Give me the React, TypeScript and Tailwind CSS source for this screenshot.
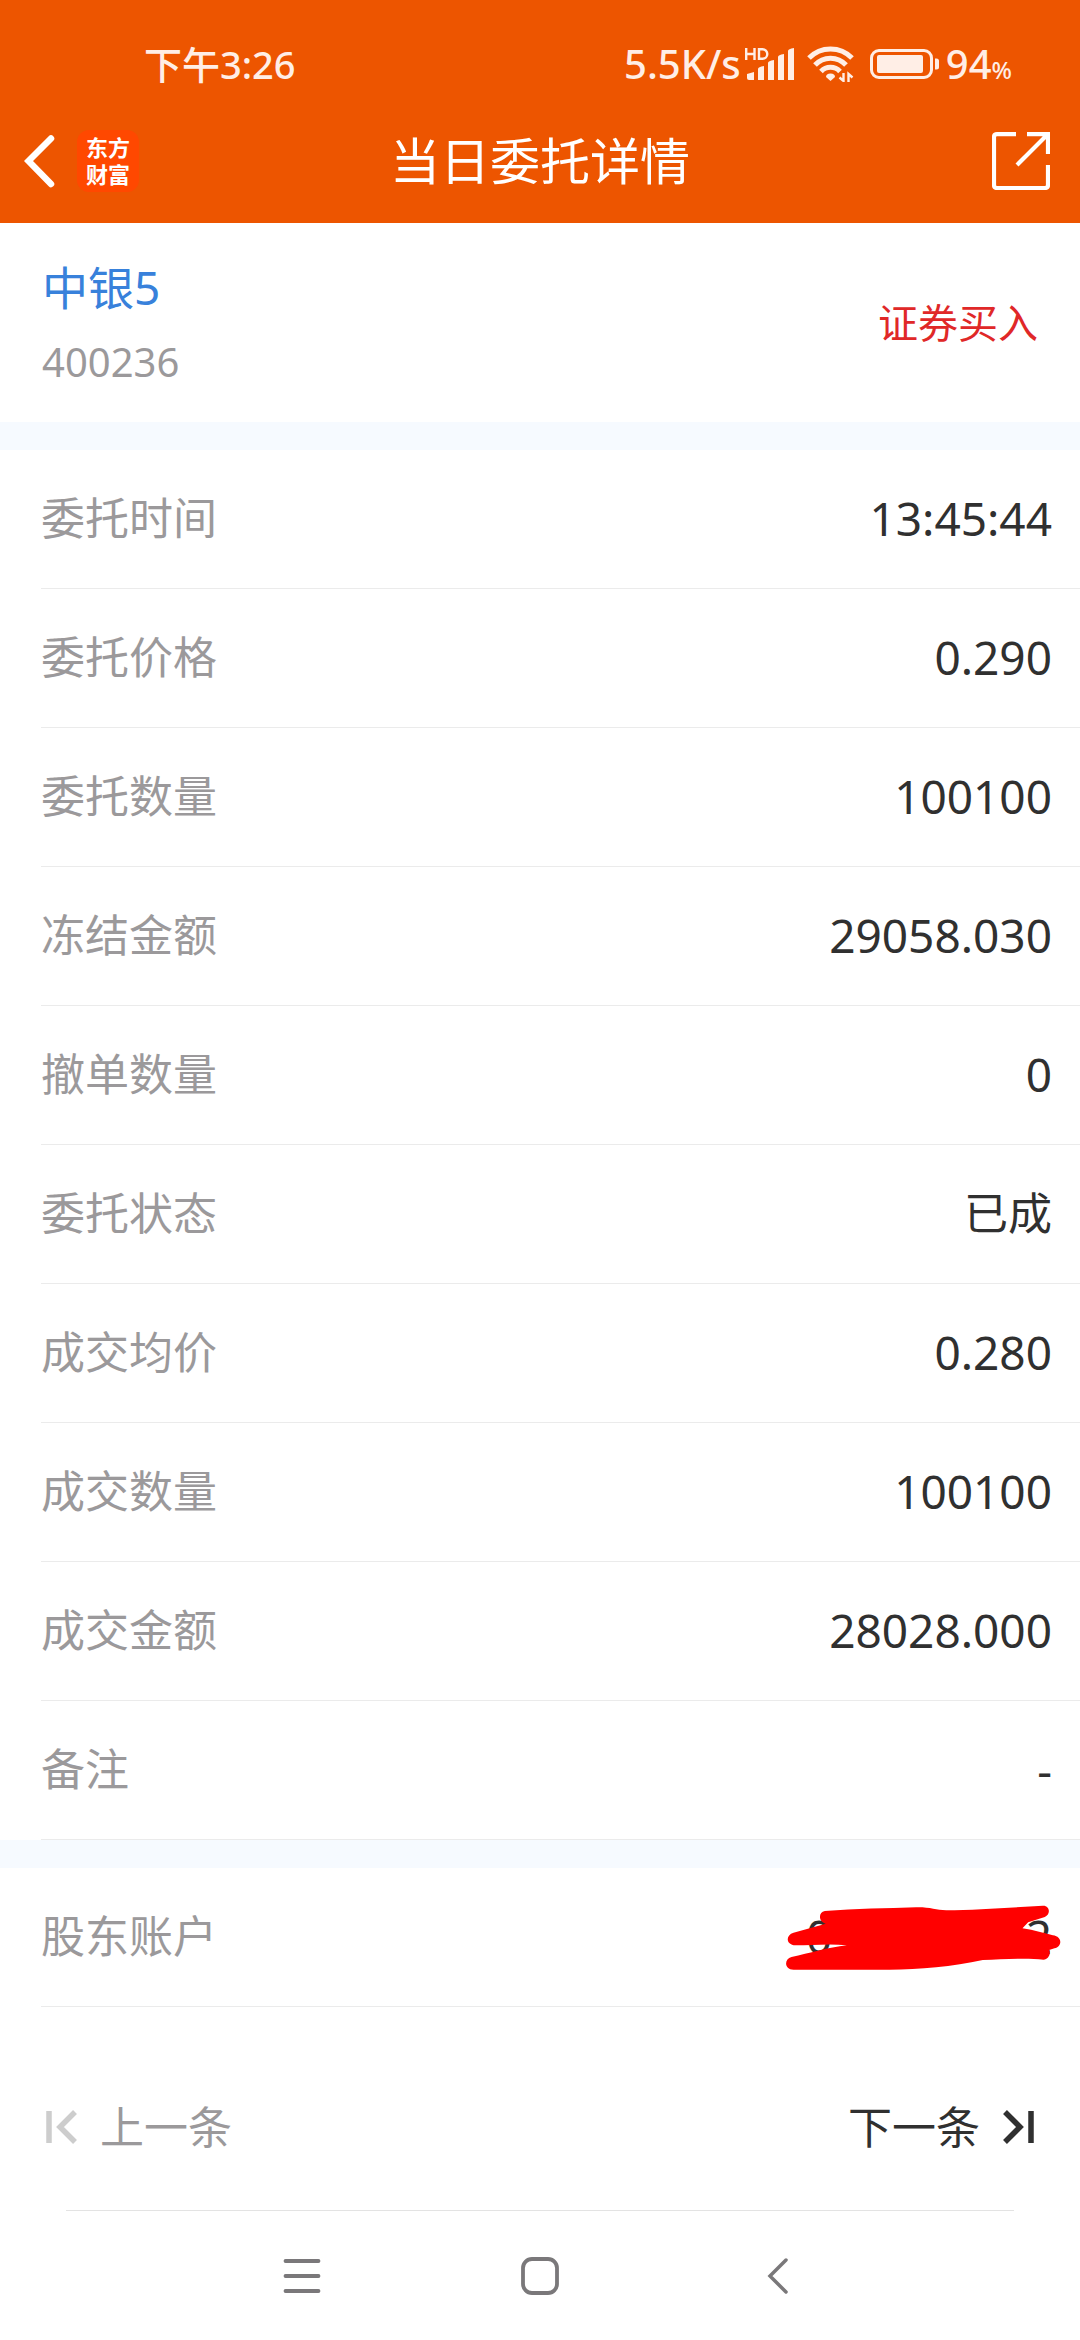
import React from "react";

const details: [string, string][] = [
  ["委托时间", "13:45:44"],
  ["委托价格", "0.290"],
  ["委托数量", "100100"],
  ["冻结金额", "29058.030"],
  ["撤单数量", "0"],
  ["委托状态", "已成"],
  ["成交均价", "0.280"],
  ["成交数量", "100100"],
  ["成交金额", "28028.000"],
  ["备注", "-"],
];

function SignalIcon() {
  return (
    <svg className="h-8 w-[50px]" viewBox="0 0 50 32" fill="currentColor" aria-label="HD">
      <g fill="none" stroke="currentColor" strokeWidth="2.400">
        <path d="M1.200 0v12M9.500 0v12M1 6h8" />
        <path d="M14 1.200v9.600h3.500a4.800 4.800 0 0 0 0-9.600z" />
      </g>
      <path d="M2 26l7-2v8H4q-2 0-2-2z" />
      <path d="M13 21q0-2 6-3v14h-6z" />
      <path d="M23 15q0-2 6-3v20h-6z" />
      <path d="M33 9q0-2 6-3v26h-6z" />
      <path d="M43 3q0-2 6-3v32h-6z" />
    </svg>
  );
}

function WifiIcon() {
  return (
    <svg className="h-9 w-[47px]" viewBox="0 0 47 36" fill="none" stroke="currentColor" strokeWidth="5" aria-label="Wi-Fi">
      <path d="M2 12a30 30 0 0 1 43 0" />
      <path d="M8 19a21 21 0 0 1 31 0" />
      <path d="M14 25.500a13 13 0 0 1 19 0" />
      <path d="M23.500 35l-4.500-4q0-3.500 4.500-3.500t4.500 3.500z" fill="currentColor" stroke="none" />
      <path d="M36.500 27v8l-4-3.500M41.500 36v-8l4 3.500" strokeWidth="2.400" />
    </svg>
  );
}

function BatteryIcon() {
  return (
    <svg className="h-[30px] w-[70px]" viewBox="0 0 70 30" aria-label="电量">
      <rect x="1.500" y="1.500" width="60" height="27" rx="7.500" fill="none" stroke="currentColor" strokeWidth="3" />
      <rect x="7" y="6" width="46" height="18" rx="2" fill="currentColor" />
      <path d="M65 9.500h1.500q2.500 0 2.500 2.500v6q0 2.500-2.500 2.500H65z" fill="currentColor" />
    </svg>
  );
}

function Row({ label, children }: { label: string; children: React.ReactNode }) {
  const isWord = typeof children === "string" && /[\u4e00-\u9fff]/.test(children);
  return (
    <div className="ml-[41px] flex h-[139px] items-center justify-between border-b border-[#ebebeb] pr-7 pb-0.5">
      <dt className="text-[44px] text-[#9b999b]">{label}</dt>
      <dd className={isWord ? "text-[44px] text-[#303030]" : "text-[46px] text-[#303030]"}>{children}</dd>
    </div>
  );
}

export default function App() {
  return (
    <div className="flex min-h-screen flex-col bg-white font-['Noto_Sans','Noto_Sans_CJK_SC',sans-serif] leading-none">
      <header className="bg-[#ed5500] text-white">
        <div className="flex h-32 items-center justify-between pr-[68px] pl-36 font-medium text-[#ffeee6]">
          <time className="text-[38px]">下午3:26</time>
          <div className="flex items-center text-[40px]">
            <span>5.5K/s</span>
            <span className="ml-1"><SignalIcon /></span>
            <span className="ml-3"><WifiIcon /></span>
            <span className="ml-4"><BatteryIcon /></span>
            <span className="ml-1.5">94<span className="text-2xl leading-none">%</span></span>
          </div>
        </div>
        <div className="grid h-[95px] grid-cols-[1fr_auto_1fr] items-start">
          <div className="flex items-center pt-0.5 pl-6">
            <button aria-label="返回">
              <svg className="h-[60px] w-8" viewBox="0 0 32 60" fill="none" stroke="currentColor" strokeWidth="6.500" strokeLinecap="round">
                <path d="M27 7.500L4.500 30L27 53" />
              </svg>
            </button>
            <div className="ml-[21px] flex size-[62px] flex-col items-center justify-center rounded-xl bg-[#ff4800] text-[22px] leading-[27px] font-bold">
              <span>东方</span>
              <span>财富</span>
            </div>
          </div>
          <h1 className="pt-2 text-[50px]">当日委托详情</h1>
          <button aria-label="分享" className="mt-1 mr-[30px] justify-self-end">
            <svg className="size-[58px]" viewBox="0 0 58 58" fill="none" stroke="currentColor" strokeWidth="4.200">
              <path d="M24 2.100H5q-3 0-3 3V53q0 3 3 3h48q3 0 3-3V33M35 2.100h21V22M56 2L25 33" />
            </svg>
          </button>
        </div>
      </header>

      <section className="flex h-[199px] items-center justify-between px-[42px]">
        <div>
          <h2 className="text-[46px] text-[#3881db]">中银5</h2>
          <p className="mt-8 text-[40px] text-[#9b999b]">400236</p>
        </div>
        <p className="text-[40px] text-[#e02828]">证券买入</p>
      </section>

      <div className="h-7 bg-[#f6faff]" />
      <dl>
        {details.map(([label, value]) => (
          <Row key={label} label={label}>{value}</Row>
        ))}
      </dl>
      <div className="h-7 bg-[#f6faff]" />
      <dl>
        <Row label="股东账户">
          <div className="relative flex w-[246px] justify-between">
            <span>0</span>
            <span>2</span>
            <svg className="absolute -top-2 -left-5 h-[65px] w-[275px]" viewBox="80 255 824 195" fill="#ff0000" aria-label="已涂抹">
              <path d="M196 273C290 266 380 265 470 262C510 261 530 270 560 271C650 270 760 262 850 257C872 256 874 284 856 291L806 307L789 325C825 330 855 340 880 346C910 350 908 380 885 385L869 390C875 402 866 418 852 419C800 413 730 418 670 420C580 440 480 448 390 449H102C74 449 73 417 96 411C150 400 205 382 262 376C210 370 155 376 108 376C78 374 78 345 102 338L199 311C176 306 176 276 196 273Z" />
            </svg>
          </div>
        </Row>
      </dl>

      <nav className="flex grow items-center justify-between px-[46px] pt-9 text-[44px]">
        <button className="flex items-center gap-[22px] text-[#9b999b]">
          <svg className="h-[34px] w-8" viewBox="0 0 32 34" fill="none" stroke="#cdcdcd" strokeWidth="5.500">
            <path d="M3 1v32M29 2L14 17l15 15" />
          </svg>
          上一条
        </button>
        <button className="flex items-center gap-[22px] text-[#303030]">
          下一条
          <svg className="h-[34px] w-8" viewBox="0 0 32 34" fill="none" stroke="currentColor" strokeWidth="5.500">
            <path d="M29 1v32M3 2l15 15L3 32" />
          </svg>
        </button>
      </nav>

      <div className="mx-[66px] border-t border-[#e3e3e3]" />
      <nav className="flex h-[129px] items-center justify-center gap-[198px] text-[#7a787a]">
        <button aria-label="最近任务">
          <svg className="size-10" viewBox="0 0 40 40" fill="none" stroke="currentColor" strokeWidth="3.800" strokeLinecap="round">
            <path d="M3.500 5h33M3.500 20h33M3.500 35h33" />
          </svg>
        </button>
        <button aria-label="主页">
          <svg className="size-10" viewBox="0 0 40 40" fill="none" stroke="currentColor" strokeWidth="3.800">
            <rect x="3" y="3" width="34" height="34" rx="9" />
          </svg>
        </button>
        <button aria-label="后退">
          <svg className="size-10" viewBox="0 0 40 40" fill="none" stroke="currentColor" strokeWidth="3.500" strokeLinecap="round">
            <path d="M28 4L12 20l16 16" />
          </svg>
        </button>
      </nav>
    </div>
  );
}
